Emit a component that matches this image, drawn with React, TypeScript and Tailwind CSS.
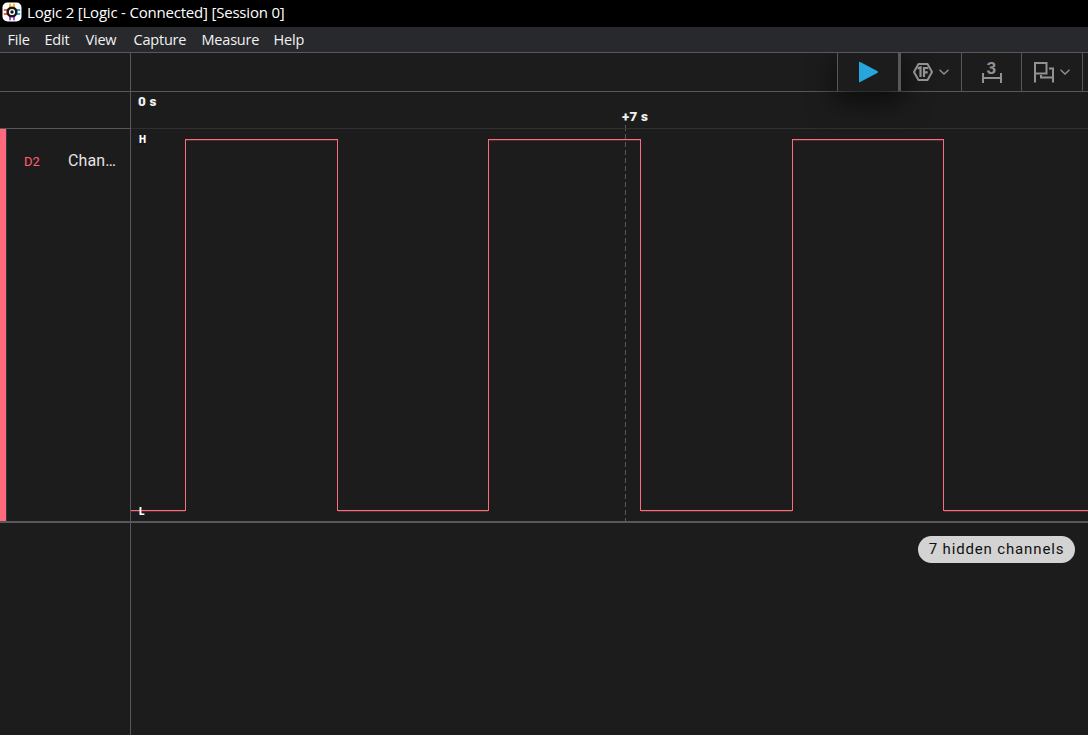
import React from "react";

const MENUS = [
  { label: "File", cls: "w-[37px]" },
  { label: "Edit", cls: "w-[41px]" },
  { label: "View", cls: "w-12" },
  { label: "Capture", cls: "w-[68px]" },
  { label: "Measure", cls: "w-[72px]" },
  { label: "Help", cls: "w-12" },
];

function Logo() {
  return (
    <svg width="20" height="20" viewBox="0 0 20 20" className="shrink-0">
      <rect x="0.5" y="0.5" width="19" height="19" rx="5" fill="#fff" />
      <path d="M8 1.8v4M12 1.8v4" stroke="#f6b91c" strokeWidth="2" />
      <path d="M8 14.2v4M12 14.2v4" stroke="#a94be0" strokeWidth="2" />
      <path d="M1.8 8h4M1.8 12h4" stroke="#f5604d" strokeWidth="2" />
      <path d="M14.2 8h4M14.2 12h4" stroke="#28a8e0" strokeWidth="2" />
      <circle cx="10" cy="10" r="5.6" fill="#181818" />
      <circle cx="10" cy="10" r="2.4" fill="#181818" stroke="#fff" strokeWidth="1.4" />
    </svg>
  );
}

function Chevron() {
  return (
    <svg width="10" height="6" viewBox="0 0 10 6" fill="none" stroke="#929292" strokeWidth="1.3">
      <path d="M0.5 0.7 5 5 9.5 0.7" />
    </svg>
  );
}

function Toolbar() {
  return (
    <div className="flex h-full">
      <button className="flex h-full w-16 items-center border-l border-r-[3px] border-[#58585c] bg-[#1c1c1c] pl-5 shadow-[0_8px_28px_2px_rgba(0,0,0,0.62)]">
        <svg width="21" height="22" viewBox="0 0 21 22">
          <path d="M1 1.6Q1 .2 2.2.9L19.3 10Q20.8 11 19.3 12L2.2 21.1Q1 21.6 1 20.4Z" fill="#27a5dc" />
        </svg>
      </button>
      <button className="relative flex h-full w-[61px] items-center gap-[6px] border-r border-[#58585c] pl-3">
        <svg width="20" height="20" viewBox="0 0 20 20" fill="none" stroke="#929292">
          <path d="M5.5 1.9H14.5L19 10L14.5 18.1H5.5L1 10Z" strokeWidth="2" strokeLinejoin="round" />
          <path d="M4.6 6.5 7.5 5.4V15M11 15V6H15.2M11 10.3H14.7" strokeWidth="2.2" />
        </svg>
        <Chevron />
      </button>
      <button className="flex h-full w-[60px] flex-col items-center border-r border-[#58585c] pt-[7px]">
        <span className="h-[14px] text-[17px] leading-[17px] font-bold text-[#929292]">3</span>
        <svg width="20" height="10" viewBox="0 0 20 10" fill="none" stroke="#929292" strokeWidth="2" className="mt-[-1px] shrink-0">
          <path d="M1 0V10M19 0V10M1 5H19" />
        </svg>
      </button>
      <button className="flex h-full w-[61px] items-center gap-[6px] border-r border-[#58585c] pl-3">
        <svg width="20" height="21" viewBox="0 0 20 21" fill="none" stroke="#929292" strokeWidth="2">
          <path d="M1 20.5V1H12.5V11.5H1M15 6.5H19V20.5M7 13V15.5H19" />
        </svg>
        <Chevron />
      </button>
      <div className="w-[5px]" />
    </div>
  );
}

function Waveform() {
  return (
    <svg width="957" height="392" viewBox="131 129 957 392" fill="none" className="block">
      <path d="M625.5 126V521" stroke="#58585c" strokeDasharray="5 3" shapeRendering="crispEdges" />
      <path
        d="M131 510.5H185.5V139.5H337.5V510.5H488.5V139.5H640.5V510.5H792.5V139.5H943.5V510.5H1088"
        stroke="#ff6b7c"
        shapeRendering="crispEdges"
      />
      <path
        d="M131 511.5H185M186 140.5H337M338 511.5H488M489 140.5H640M641 511.5H792M793 140.5H943M944 511.5H1088"
        stroke="#ff6b7c"
        strokeOpacity="0.22"
        shapeRendering="crispEdges"
      />
    </svg>
  );
}

export default function App() {
  return (
    <div className="flex h-[735px] w-[1088px] flex-col overflow-hidden bg-[#1c1c1c] font-['Roboto',sans-serif] text-white">
      <header className="relative z-20 flex h-[27px] shrink-0 items-center gap-[5px] bg-black pb-[3px] pl-[2px]">
        <Logo />
        <span className="font-['Open_Sans',sans-serif] text-[15px] leading-5 tracking-[-0.2px] whitespace-nowrap">
          Logic 2 [Logic - Connected] [Session 0]
        </span>
      </header>
      <nav className="relative z-20 flex h-[26px] shrink-0 items-center border-b border-[#58585c] bg-[#28292d] pl-[7.5px] font-['Open_Sans',sans-serif] text-[14.5px] tracking-[-0.2px] text-[#f2f2f2]">
        {MENUS.map((m) => (
          <button key={m.label} className={`text-left ${m.cls}`}>
            {m.label}
          </button>
        ))}
      </nav>
      <div className="flex min-h-0 flex-1">
        <aside className="flex w-[131px] shrink-0 flex-col border-r border-[#58585c]">
          <div className="h-[39px] shrink-0 border-b border-[#58585c]" />
          <div className="h-[37px] shrink-0 border-b border-[#58585c]" />
          <div className="flex h-[394px] shrink-0 border-b-2 border-[#58585c]">
            <div className="w-[7px] border-r border-[#343436] bg-[#ff6b7c] bg-clip-padding" />
            <div className="flex h-16 items-center pl-[17px]">
              <span className="w-[44px] pt-px text-[13px] text-[#ff5f70]">D2</span>
              <span className="text-[16px] tracking-[0.1px] text-[#e4e4e4]">Chan…</span>
            </div>
          </div>
        </aside>
        <main className="flex min-w-0 flex-1 flex-col">
          <div className="relative z-10 flex h-[39px] shrink-0 justify-end border-b border-[#58585c]">
            <Toolbar />
          </div>
          <div className="relative h-[37px] shrink-0 border-b border-[#303033] text-[13.5px] leading-4 font-black tracking-[0.2px] text-[#f0f0f0]">
            <span className="absolute top-px left-[7px]">0 s</span>
            <span className="absolute top-4 left-[491px]">+7 s</span>
            <span className="absolute bottom-0 left-[494px] h-[3px] w-px bg-[#58585c]" />
          </div>
          <div className="relative h-[394px] shrink-0 border-b-2 border-[#58585c]">
            <Waveform />
            <span className="absolute top-[6px] left-[8px] bg-[#17171a] text-[10px] leading-[10px] font-black">H</span>
            <span className="absolute top-[378px] left-[8px] text-[10px] leading-[10px] font-black">L</span>
          </div>
          <div className="flex justify-end pt-[13px] pr-[13px]">
            <div className="flex h-[27px] w-[157px] items-center justify-center rounded-full bg-[#d3d3d3] pb-px text-[15px] tracking-[0.85px] whitespace-nowrap text-[#101010]">
              7 hidden channels
            </div>
          </div>
        </main>
      </div>
    </div>
  );
}
